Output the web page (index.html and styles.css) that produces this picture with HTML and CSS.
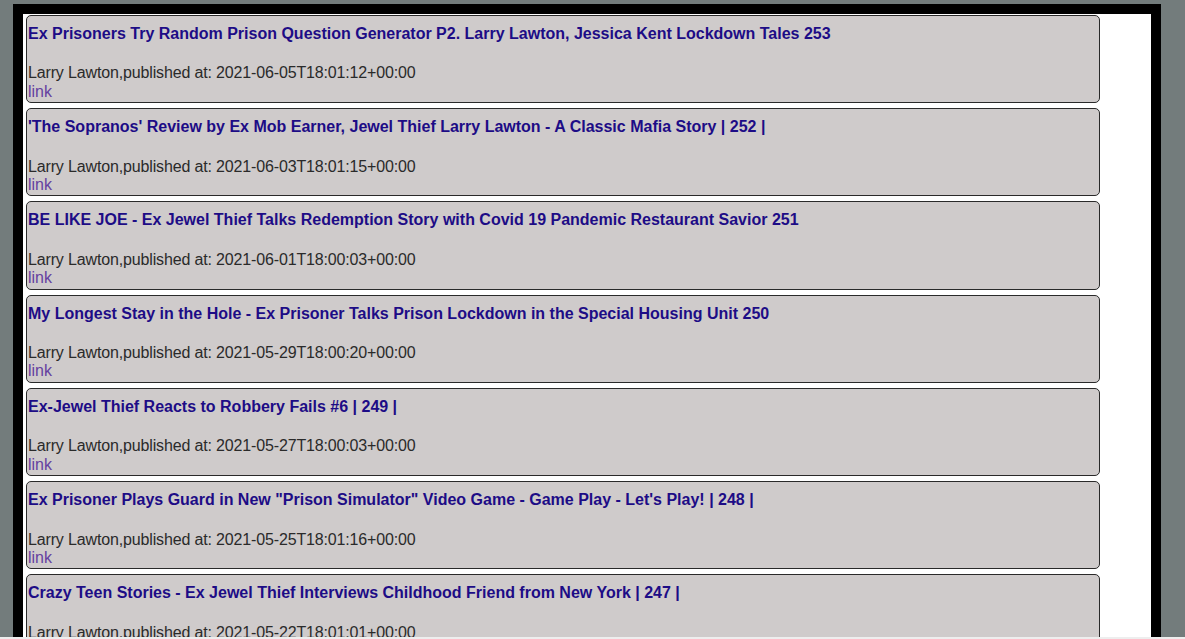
FILE: index.html
```html
<!DOCTYPE html>
<html lang="en">
<head>
<meta charset="utf-8">
<title>Videos</title>
<link rel="stylesheet" href="styles.css">
</head>
<body>
<div class="frame">
  <div class="list">
    <div class="card">
      <p class="title">Ex Prisoners Try Random Prison Question Generator P2. Larry Lawton, Jessica Kent Lockdown Tales 253</p>
      <p class="meta">Larry Lawton,published at: 2021-06-05T18:01:12+00:00</p>
      <a class="link" href="#">link</a>
    </div>
    <div class="card">
      <p class="title">'The Sopranos' Review by Ex Mob Earner, Jewel Thief Larry Lawton - A Classic Mafia Story | 252 |</p>
      <p class="meta">Larry Lawton,published at: 2021-06-03T18:01:15+00:00</p>
      <a class="link" href="#">link</a>
    </div>
    <div class="card">
      <p class="title">BE LIKE JOE - Ex Jewel Thief Talks Redemption Story with Covid 19 Pandemic Restaurant Savior 251</p>
      <p class="meta">Larry Lawton,published at: 2021-06-01T18:00:03+00:00</p>
      <a class="link" href="#">link</a>
    </div>
    <div class="card">
      <p class="title">My Longest Stay in the Hole - Ex Prisoner Talks Prison Lockdown in the Special Housing Unit 250</p>
      <p class="meta">Larry Lawton,published at: 2021-05-29T18:00:20+00:00</p>
      <a class="link" href="#">link</a>
    </div>
    <div class="card">
      <p class="title">Ex-Jewel Thief Reacts to Robbery Fails #6 | 249 |</p>
      <p class="meta">Larry Lawton,published at: 2021-05-27T18:00:03+00:00</p>
      <a class="link" href="#">link</a>
    </div>
    <div class="card">
      <p class="title">Ex Prisoner Plays Guard in New "Prison Simulator" Video Game - Game Play - Let's Play! | 248 |</p>
      <p class="meta">Larry Lawton,published at: 2021-05-25T18:01:16+00:00</p>
      <a class="link" href="#">link</a>
    </div>
    <div class="card">
      <p class="title">Crazy Teen Stories - Ex Jewel Thief Interviews Childhood Friend from New York | 247 |</p>
      <p class="meta">Larry Lawton,published at: 2021-05-22T18:01:01+00:00</p>
      <a class="link" href="#">link</a>
    </div>
  </div>
</div>
<div class="bottom-strip"></div>
</body>
</html>
```

FILE: styles.css
```css
html, body {
  margin: 0;
  padding: 0;
}
body {
  background: #737c7c;
  font-family: "Liberation Sans", Arial, sans-serif;
  font-size: 16px;
  color: #222;
}
.frame {
  margin: 4px 0 0 13px;
  width: 1148px;
  box-sizing: border-box;
  border: 10px solid #000;
  background: #fff;
  padding: 1px 0 0 3px;
}
.list {
  display: flex;
  flex-direction: column;
  gap: 5px;
}
.card {
  width: 1074px;
  box-sizing: border-box;
  background: #cfcbcb;
  border: 1px solid #2a2a2a;
  border-radius: 5px;
  padding: 0 1px 1px;
  display: flex;
  flex-direction: column;
}
.title {
  margin: 9px 0 21px;
  font-weight: bold;
  color: #1d0c86;
  line-height: 18.4px;
}
.meta {
  margin: 0;
  color: #2a2a2a;
  letter-spacing: -0.15px;
  line-height: 18.4px;
}
.link {
  color: #6541a0;
  text-decoration: none;
  line-height: 18.4px;
  align-self: flex-start;
}
.bottom-strip {
  position: fixed;
  left: 0;
  right: 0;
  bottom: 0;
  height: 2px;
  background: #eeeeee;
}
```
